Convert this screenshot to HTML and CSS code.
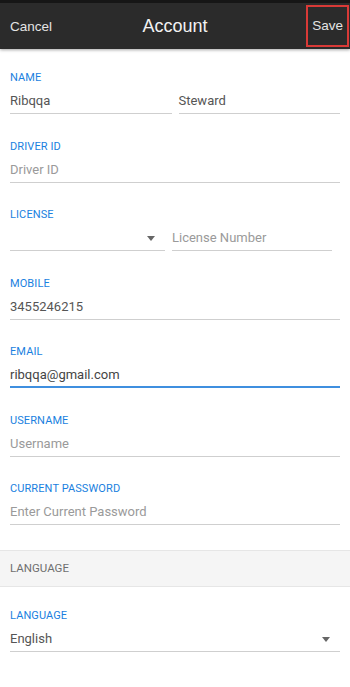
FILE: index.html
```html
<!DOCTYPE html>
<html>
<head>
<meta charset="utf-8">
<link rel="stylesheet" href="styles.css">
</head>
<body>
<header class="topbar">
  <span class="btn cancel">Cancel</span>
  <span class="title">Account</span>
  <span class="btn save">Save</span>
</header>
<main class="form">
  <div class="field first">
    <div class="label">NAME</div>
    <div class="row">
      <div class="input value">Ribqqa</div>
      <div class="input value">Steward</div>
    </div>
  </div>
  <div class="field">
    <div class="label">DRIVER ID</div>
    <div class="input ph">Driver ID</div>
  </div>
  <div class="field">
    <div class="label">LICENSE</div>
    <div class="row lic">
      <div class="input select"><span class="arrow"></span></div>
      <div class="input ph">License Number</div>
    </div>
  </div>
  <div class="field">
    <div class="label">MOBILE</div>
    <div class="input value">3455246215</div>
  </div>
  <div class="field">
    <div class="label">EMAIL</div>
    <div class="input value focused">ribqqa@gmail.com</div>
  </div>
  <div class="field">
    <div class="label">USERNAME</div>
    <div class="input ph">Username</div>
  </div>
  <div class="field">
    <div class="label">CURRENT PASSWORD</div>
    <div class="input ph">Enter Current Password</div>
  </div>
  <div class="section">LANGUAGE</div>
  <div class="field first">
    <div class="label">LANGUAGE</div>
    <div class="input value select lang">English<span class="arrow"></span></div>
  </div>
</main>
</body>
</html>
```

FILE: styles.css
```css
html, body {
  margin: 0;
  padding: 0;
  background: #ffffff;
}
body {
  width: 350px;
  height: 687px;
  overflow: hidden;
  font-family: Roboto, "Noto Sans", sans-serif;
}
.topbar {
  height: 46px;
  background: #2b2b2b;
  border-top: 3px solid #161616;
  box-shadow: 0 1px 3px rgba(0,0,0,0.35);
  display: grid;
  grid-template-columns: 1fr auto 1fr;
  align-items: center;
  font-family: "Liberation Sans", Arial, sans-serif;
  color: #e4e4e4;
}
.btn {
  font-size: 13.5px;
}
.cancel {
  padding-left: 10px;
  justify-self: start;
}
.title {
  font-size: 18px;
  color: #f2f2f2;
}
.save {
  justify-self: end;
  box-sizing: border-box;
  margin-right: 1px;
  padding: 11px 4px 11px 4px;
  border: 2px solid #d93a37;
  line-height: 16px;
}
.form {
  padding: 0 10px;
}
.field {
  padding-top: 25.5px;
}
.field.first {
  padding-top: 22px;
}
.label {
  font-size: 11px;
  line-height: 14px;
  color: #1a7fe0;
  letter-spacing: 0.1px;
}
.row {
  display: flex;
  gap: 7px;
}
.row .input {
  flex: 1;
}
.row.lic {
  margin-right: 8px;
}
.row.lic .select {
  flex: 0 0 155px;
}
.input {
  height: 25px;
  margin-top: 3px;
  line-height: 25px;
  font-size: 13px;
  border-bottom: 1px solid #cfcfcf;
  color: #555555;
  position: relative;
}
.input.ph {
  color: #9a9a9a;
}
.input.focused {
  border-bottom: 2px solid #3f8fdf;
  height: 24px;
  color: #444444;
}
.arrow {
  position: absolute;
  right: 10px;
  top: 11px;
  width: 0;
  height: 0;
  border-left: 4.5px solid transparent;
  border-right: 4.5px solid transparent;
  border-top: 5px solid #666666;
}
.section {
  margin: 25px -10px 0;
  height: 35px;
  line-height: 35px;
  background: #f5f5f5;
  border-top: 1px solid #e6e6e6;
  border-bottom: 1px solid #e6e6e6;
  padding-left: 10px;
  font-size: 11.5px;
  color: #6f6f6f;
}
```
